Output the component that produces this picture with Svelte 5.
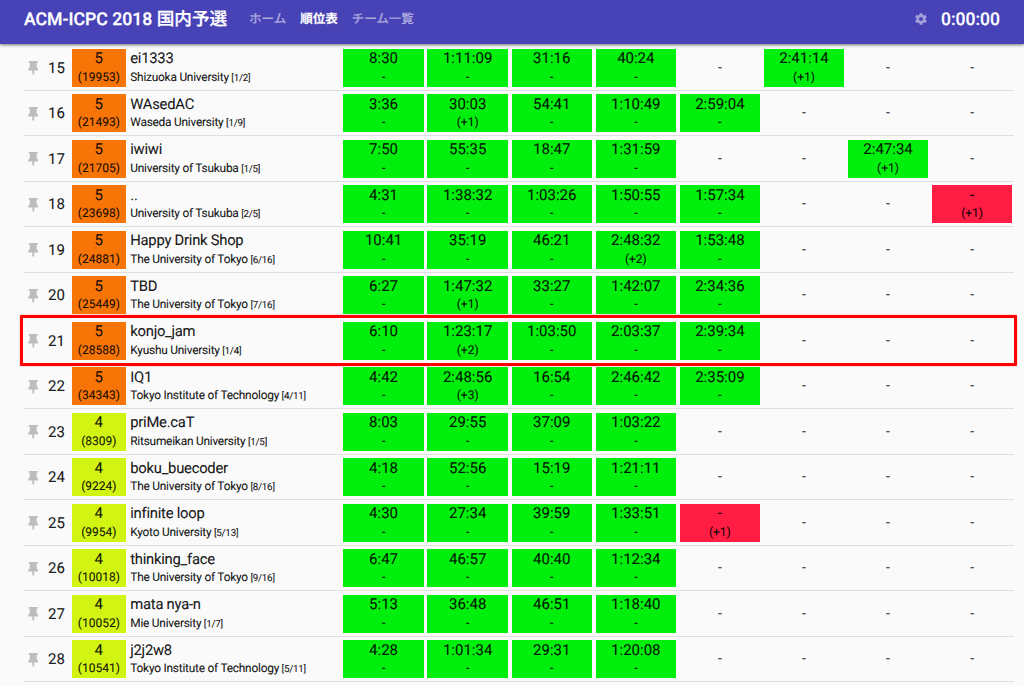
<script>
  const parse = (s) => s.split(' ').map((c) => {
    const failed = c.startsWith('x');
    const [time, miss] = c.replace('x', '').split('+');
    return { time: failed ? '-' : time, miss: miss ? `(+${miss})` : '-', state: failed ? 'wrong' : time === '-' ? '' : 'solved' };
  });
  const teams = [
    [15, 5, 19953, 'ei1333', 'Shizuoka University', '1/2', '8:30 1:11:09 31:16 40:24 - 2:41:14+1 - -'],
    [16, 5, 21493, 'WAsedAC', 'Waseda University', '1/9', '3:36 30:03+1 54:41 1:10:49 2:59:04 - - -'],
    [17, 5, 21705, 'iwiwi', 'University of Tsukuba', '1/5', '7:50 55:35 18:47 1:31:59 - - 2:47:34+1 -'],
    [18, 5, 23698, '..', 'University of Tsukuba', '2/5', '4:31 1:38:32 1:03:26 1:50:55 1:57:34 - - x+1'],
    [19, 5, 24881, 'Happy Drink Shop', 'The University of Tokyo', '6/16', '10:41 35:19 46:21 2:48:32+2 1:53:48 - - -'],
    [20, 5, 25449, 'TBD', 'The University of Tokyo', '7/16', '6:27 1:47:32+1 33:27 1:42:07 2:34:36 - - -'],
    [21, 5, 28588, 'konjo_jam', 'Kyushu University', '1/4', '6:10 1:23:17+2 1:03:50 2:03:37 2:39:34 - - -'],
    [22, 5, 34343, 'IQ1', 'Tokyo Institute of Technology', '4/11', '4:42 2:48:56+3 16:54 2:46:42 2:35:09 - - -'],
    [23, 4, 8309, 'priMe.caT', 'Ritsumeikan University', '1/5', '8:03 29:55 37:09 1:03:22 - - - -'],
    [24, 4, 9224, 'boku_buecoder', 'The University of Tokyo', '8/16', '4:18 52:56 15:19 1:21:11 - - - -'],
    [25, 4, 9954, 'infinite loop', 'Kyoto University', '5/13', '4:30 27:34 39:59 1:33:51 x+1 - - -'],
    [26, 4, 10018, 'thinking_face', 'The University of Tokyo', '9/16', '6:47 46:57 40:40 1:12:34 - - - -'],
    [27, 4, 10052, 'mata nya-n', 'Mie University', '1/7', '5:13 36:48 46:51 1:18:40 - - - -'],
    [28, 4, 10541, 'j2j2w8', 'Tokyo Institute of Technology', '5/11', '4:28 1:01:34 29:31 1:20:08 - - - -']
  ].map(([rank, solved, penalty, name, school, order, cells]) => ({ rank, solved, penalty, name, school, order, cells: parse(cells) }));
</script>

<div class="page">
  <header>
    <h1>ACM-ICPC 2018 国内予選</h1>
    <nav><span>ホーム</span><span class="active">順位表</span><span>チーム一覧</span></nav>
    <svg class="gear" viewBox="0 0 24 24"><path d="M19.43 12.98c.04-.32.07-.64.07-.98s-.03-.66-.07-.98l2.11-1.65c.19-.15.24-.42.12-.64l-2-3.46c-.12-.22-.39-.3-.61-.22l-2.49 1c-.52-.4-1.08-.73-1.69-.98l-.38-2.65C14.46 2.18 14.25 2 14 2h-4c-.25 0-.46.18-.49.42l-.38 2.65c-.61.25-1.17.59-1.69.98l-2.49-1c-.23-.09-.49 0-.61.22l-2 3.46c-.13.22-.07.49.12.64l2.11 1.65c-.04.32-.07.65-.07.98s.03.66.07.98l-2.11 1.65c-.19.15-.24.42-.12.64l2 3.46c.12.22.39.3.61.22l2.49-1c.52.4 1.08.73 1.69.98l.38 2.65c.03.24.24.42.49.42h4c.25 0 .46-.18.49-.42l.38-2.65c.61-.25 1.17-.59 1.69-.98l2.49 1c.23.09.49 0 .61-.22l2-3.46c.12-.22.07-.49-.12-.64l-2.11-1.65zM12 15.5a3.5 3.5 0 1 1 0-7 3.5 3.5 0 0 1 0 7z"/></svg>
    <time>0:00:00</time>
  </header>
  <main>
    {#each teams as t (t.rank)}
      <div class="row">
        <svg class="pin" viewBox="0 0 10 14"><path d="M0.5 0h9v1.7H8.4v4.6l1.6 1.5v1.8H5.9V13L5 14l-.9-1V9.6H0V7.8l1.6-1.5V1.7H.5z"/></svg>
        <span class="rank">{t.rank}</span>
        <div class="box score" class:four={t.solved === 4}><b>{t.solved}</b><small>({t.penalty})</small></div>
        <div class="box team"><b>{t.name}</b><small>{t.school} <i>[{t.order}]</i></small></div>
        <div class="problems">
          {#each t.cells as c}
            {#if c.state}
              <div class="box {c.state}"><b>{c.time}</b><small>{c.miss}</small></div>
            {:else}
              <div class="empty">-</div>
            {/if}
          {/each}
        </div>
        {#if t.rank === 21}<div class="marker"></div>{/if}
      </div>
    {/each}
  </main>
</div>

<style>
  :global(body) { background: #fafafa; overflow: hidden; }
  .page { height: 685px; overflow: hidden; font-family: Roboto, "Noto Sans CJK JP", sans-serif; color: rgba(0, 0, 0, 0.9); text-rendering: geometricPrecision; -webkit-text-stroke: 0.15px; }
  header { position: relative; z-index: 1; box-sizing: border-box; height: 43.5px; padding: 0 24px 5px; display: flex; align-items: center; background: #4842b7; box-shadow: 0 1px 3px rgba(0, 0, 0, 0.55); color: #fff; }
  h1 { margin: 0; padding-top: 1px; width: 225px; font-size: 17.65px; line-height: 24px; font-weight: 500; white-space: nowrap; -webkit-text-stroke: 0.25px; }
  nav { padding-top: 1.5px; display: flex; gap: 14px; font-size: 12.5px; line-height: 20px; font-weight: 500; color: rgba(255, 255, 255, 0.5); }
  .active { color: #fff; font-weight: 700; }
  .gear { width: 14px; height: 14px; margin-left: auto; fill: rgba(255, 255, 255, 0.5); }
  time { padding-top: 1px; margin-left: 13px; font-size: 17.5px; line-height: 24px; font-weight: 500; }
  main { margin: 1.8px 10px 0 24px; }
  .row { position: relative; box-sizing: border-box; height: 45.5px; padding-top: 3.7px; display: flex; border-bottom: 1px solid #e0e0e0; }
  .pin { width: 10.5px; height: 14px; margin: 12.3px 10.1px 0 3.5px; fill: #bdbdbd; -webkit-text-stroke: 0; }
  .rank { width: 23.9px; font-size: 15px; line-height: 38.4px; }
  .box { box-sizing: border-box; height: 37.6px; padding-top: 0.4px; text-align: center; }
  .box b, .box small { display: block; font-weight: 400; white-space: nowrap; }
  .box b { font-size: 15px; line-height: 19px; }
  .box small { font-size: 12px; line-height: 18px; margin-top: -0.4px; }
  .score { width: 53.7px; background: #f77507; }
  .score.four { background: #d2f412; }
  .team { width: 213.3px; margin-left: 4.6px; margin-right: -0.2px; text-align: left; }
  .team b { font-size: 14.8px; letter-spacing: -0.25px; }
  .team small { font-size: 11.9px; letter-spacing: -0.23px; }
  .team i { font-style: normal; font-size: 9.8px; margin-left: -0.2px; }
  .problems { display: grid; grid-template-columns: repeat(8, 80.4px); column-gap: 3.7px; }
  .solved { background: #00ef0c; }
  .wrong { background: #ff1d44; }
  .empty { text-align: center; font-size: 14px; line-height: 38.6px; }
  .marker { position: absolute; left: -4px; top: -3px; width: 991px; height: 45px; border: 3px solid #f00; border-radius: 1px; box-shadow: 0 0 1px #f00; }
</style>
